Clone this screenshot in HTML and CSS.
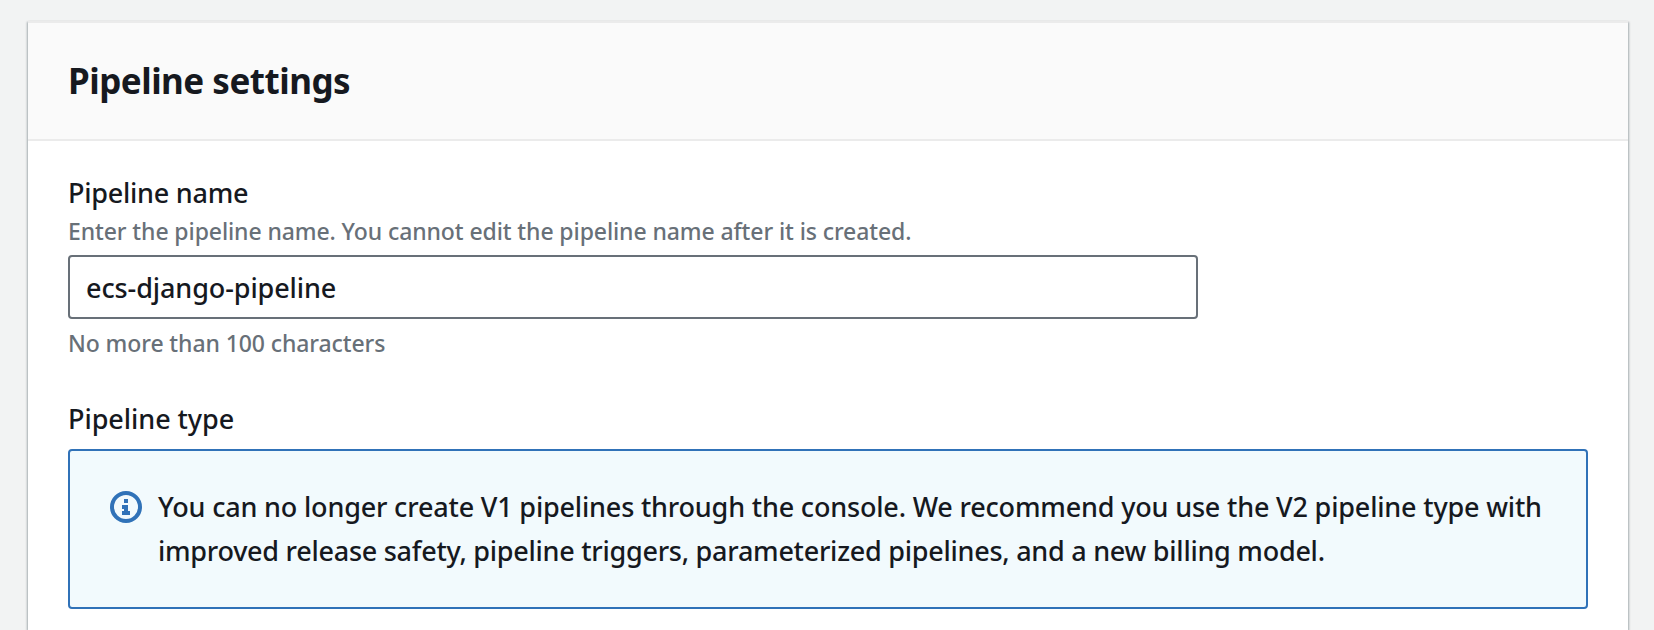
FILE: index.html
```html
<!DOCTYPE html>
<html lang="en">
<head>
<meta charset="utf-8">
<title>Pipeline settings</title>
<link rel="stylesheet" href="styles.css">
</head>
<body>
<section class="card">
  <header class="card-header"><h2 class="card-title">Pipeline settings</h2></header>
  <div class="card-body">
    <div class="field">
      <label class="label label-name" for="name">Pipeline name</label>
      <p class="hint hint-description">Enter the pipeline name. You cannot edit the pipeline name after it is created.</p>
      <input class="input" id="name" type="text" value="ecs-django-pipeline">
      <p class="hint hint-constraint">No more than 100 characters</p>
    </div>
    <div class="field">
      <div class="label label-type">Pipeline type</div>
      <div class="alert">
        <svg class="alert-icon" viewBox="0 0 32 32" aria-hidden="true">
          <circle cx="16" cy="16" r="14" fill="none" stroke="currentColor" stroke-width="4"/>
          <path fill="currentColor" d="M14 8h4v4h-4zM12 14h6v6h2v4h-8v-4h2v-2h-2z"/>
        </svg>
        <p class="alert-text"><span class="line-one">You can no longer create V1 pipelines through the console. We recommend you use the V2 pipeline type with</span><br><span class="line-two">improved release safety, pipeline triggers, parameterized pipelines, and a new billing model.</span></p>
      </div>
    </div>
  </div>
</section>
</body>
</html>
```
FILE: styles.css
```css
* { box-sizing: border-box; }
body {
  margin: 0;
  height: 630px;
  padding: 21px 26px 0 28px;
  overflow: hidden;
  background: #f2f3f3;
  color: #16191f;
  font-family: "Noto Sans", "Open Sans", sans-serif;
  font-size: 27px;
  font-weight: 500;
  line-height: 44px;
}
p, h2 { margin: 0; }
.card {
  height: 609px;
  background: #fff;
  border-top: 2px solid #ebebeb;
  box-shadow: 1px 1px 2px rgba(0, 28, 36, 0.3), -1px 1px 2px rgba(0, 28, 36, 0.3);
}
.card-header {
  height: 118px;
  padding: 36px 40px 0;
  background: #fafafa;
  border-bottom: 2px solid #ebebeb;
}
.card-title { font-size: 35px; font-weight: 700; line-height: 44px; letter-spacing: -0.5px; }
.card-body {
  display: flex;
  flex-direction: column;
  gap: 38px;
  padding: 30px 40px 0;
}
.field { display: flex; flex-direction: column; }
.label-name { letter-spacing: -0.25px; }
.label-type { letter-spacing: -0.05px; }
.hint { color: #687078; font-size: 23px; line-height: 32px; letter-spacing: -0.1px; white-space: nowrap; }
.hint-constraint { margin-top: 8px; }
.input {
  width: 1130px;
  height: 64px;
  margin-top: 8px;
  padding: 1px 16px 0;
  border: 2px solid #687078;
  border-radius: 4px;
  background: #fff;
  color: inherit;
  font: inherit;
  letter-spacing: -0.1px;
  outline: none;
}
.alert {
  display: flex;
  gap: 16px;
  height: 160px;
  margin-top: 8px;
  padding: 34px 0 0 40px;
  border: 2px solid #3072b8;
  border-radius: 4px;
  background: #f2fafd;
}
.alert-icon { flex: none; width: 32px; height: 32px; margin-top: 6px; color: #3072b8; }
.alert-text { white-space: nowrap; }
.line-one { letter-spacing: -0.18px; }
.line-two { letter-spacing: -0.26px; }
```
